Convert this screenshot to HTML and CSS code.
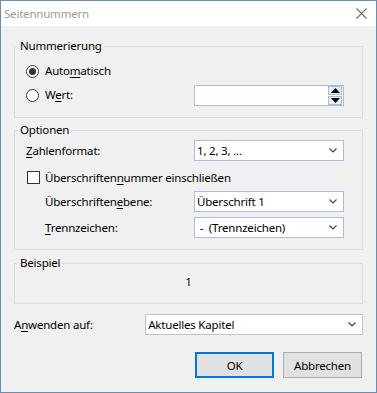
FILE: index.html
```html
<!DOCTYPE html>
<html lang="de">
<head>
<meta charset="utf-8">
<title>Seitennummern</title>
<link rel="stylesheet" href="styles.css">
</head>
<body>
<div class="window">
  <div class="titlebar">
    <span class="title">Seitennummern</span>
    <svg class="close" width="11" height="11" viewBox="0 0 11 11"><path d="M0.5 0.5 L10.5 10.5 M10.5 0.5 L0.5 10.5" stroke="#6d6d6d" stroke-width="1.1" fill="none"/></svg>
  </div>
  <div class="body">
    <fieldset class="group g-num">
      <legend>Nummerierung</legend>
      <div class="row radio-row">
        <span class="radio checked"></span><span class="txt">Auto<u>m</u>atisch</span>
      </div>
      <div class="row radio-row">
        <span class="radio"></span><span class="txt lbl-wert">W<u>e</u>rt:</span>
        <div class="spin">
          <div class="spin-btns">
            <span class="sbtn"><svg width="9" height="5" viewBox="0 0 9 5"><path d="M0 5 L4.5 0 L9 5 Z" fill="#000"/></svg></span>
            <span class="sbtn"><svg width="9" height="5" viewBox="0 0 9 5"><path d="M0 0 L4.5 5 L9 0 Z" fill="#000"/></svg></span>
          </div>
        </div>
      </div>
    </fieldset>

    <fieldset class="group g-opt">
      <legend>Optionen</legend>
      <div class="row r1">
        <span class="label"><u>Z</u>ahlenformat:</span>
        <div class="select"><span>1, 2, 3, ...</span><svg class="chev" width="8" height="5" viewBox="0 0 8 5"><path d="M0.5 0.5 L4 4 L7.5 0.5" stroke="#444" stroke-width="1.2" fill="none"/></svg></div>
      </div>
      <div class="row r2">
        <span class="check"></span><span class="txt">Überschriften<u>n</u>ummer einschließen</span>
      </div>
      <div class="row r3 indent">
        <span class="label">Überschriften<u>e</u>bene:</span>
        <div class="select"><span>Überschrift 1</span><svg class="chev" width="8" height="5" viewBox="0 0 8 5"><path d="M0.5 0.5 L4 4 L7.5 0.5" stroke="#444" stroke-width="1.2" fill="none"/></svg></div>
      </div>
      <div class="row r4 indent">
        <span class="label"><u>T</u>rennzeichen:</span>
        <div class="select"><span>&nbsp;-&nbsp; (Trennzeichen)</span><svg class="chev" width="8" height="5" viewBox="0 0 8 5"><path d="M0.5 0.5 L4 4 L7.5 0.5" stroke="#444" stroke-width="1.2" fill="none"/></svg></div>
      </div>
    </fieldset>

    <fieldset class="group g-ex">
      <legend>Beispiel</legend>
      <div class="example">1</div>
    </fieldset>

    <div class="apply">
      <span class="apply-label">A<u>n</u>wenden auf:</span>
      <div class="select wide"><span>Aktuelles Kapitel</span><svg class="chev" width="8" height="5" viewBox="0 0 8 5"><path d="M0.5 0.5 L4 4 L7.5 0.5" stroke="#444" stroke-width="1.2" fill="none"/></svg></div>
    </div>

    <div class="buttons">
      <button class="btn default">OK</button>
      <button class="btn">Abbrechen</button>
    </div>
  </div>
</div>
</body>
</html>
```
FILE: styles.css
```css
* { box-sizing: border-box; }
html, body { margin: 0; padding: 0; }
body {
  font-family: "Noto Sans", "Open Sans", sans-serif;
  font-size: 11.5px;
  letter-spacing: -0.2px;
  color: #000;
  background: #fff;
}
u { text-decoration: underline; text-underline-offset: 2px; }

.window {
  width: 377px;
  height: 393px;
  border: 1px solid #6a8db3;
  display: flex;
  flex-direction: column;
}
.titlebar {
  height: 25px;
  flex: none;
  background: #fff;
  display: flex;
  align-items: center;
  justify-content: space-between;
  padding: 0 9px 0 3px;
}
.title { color: #9a9a9a; line-height: 16px; }
.close { display: block; }

.body {
  flex: 1;
  background: #f0f0f0;
  padding: 12px 13px 0 13px;
  display: flex;
  flex-direction: column;
}

.group {
  margin: 0;
  padding: 0;
  border: 1px solid #dcdcdc;
  min-width: 0;
}
.group legend {
  margin-left: 3px;
  padding: 0 2px;
  line-height: 16px;
}
.g-num { padding: 5px 0 10px 0; }
.g-opt { margin-top: 4px; padding: 2px 0 11px 0; }
.g-ex { margin-top: 5px; padding: 3px 0 13px 0; }

.row {
  display: flex;
  align-items: center;
  padding-left: 11px;
}
.radio-row { height: 24px; }
.radio {
  width: 13px;
  height: 13px;
  border-radius: 50%;
  border: 1px solid #333;
  background: #fff;
  display: flex;
  align-items: center;
  justify-content: center;
  flex: none;
}
.radio.checked::after {
  content: "";
  width: 7px;
  height: 7px;
  border-radius: 50%;
  background: #333;
}
.txt { margin-left: 6px; line-height: 16px; }
.lbl-wert { width: 149px; }

.spin {
  width: 150px;
  height: 21px;
  border: 1px solid #a9bcd8;
  background: #fff;
  display: flex;
  justify-content: flex-end;
  align-items: center;
  padding-right: 1px;
}
.spin-btns {
  display: flex;
  flex-direction: column;
  gap: 1px;
}
.sbtn {
  width: 14px;
  height: 9px;
  border: 1px solid #a9bcd8;
  background: #e8edf5;
  display: flex;
  align-items: center;
  justify-content: center;
}
.sbtn svg { display: block; }

.r1, .r2, .r3, .r4 { height: 21px; }
.r2 { margin-top: 6px; }
.r3 { margin-top: 3px; }
.r4 { margin-top: 5px; }
.label { width: 168px; line-height: 16px; }
.indent { padding-left: 30px; }
.indent .label { width: 149px; }

.check {
  width: 13px;
  height: 13px;
  border: 1px solid #333;
  background: #fff;
  margin-left: 1px;
  flex: none;
}
.r2 .txt { margin-left: 5px; }

.select {
  width: 150px;
  height: 21px;
  border: 1px solid #a9bcd8;
  background: #fff;
  display: flex;
  align-items: center;
  justify-content: space-between;
  padding: 0 6px 0 2px;
  line-height: 16px;
}
.chev { display: block; flex: none; }

.example {
  text-align: center;
  line-height: 16px;
}

.apply {
  display: flex;
  align-items: center;
  margin-top: 10px;
  height: 21px;
}
.apply-label { width: 132px; line-height: 16px; }
.select.wide {
  width: 219px;
  border-color: #c3c3c3;
}

.buttons {
  display: flex;
  justify-content: flex-end;
  gap: 9px;
  margin-top: 17px;
  padding-right: 1px;
}
.btn {
  width: 79px;
  height: 26px;
  font: inherit;
  letter-spacing: inherit;
  color: #000;
  background: #e1e1e1;
  border: 1px solid #adadad;
  padding: 0;
  margin: 0;
}
.btn.default {
  border: 2px solid #0078d7;
}
```
